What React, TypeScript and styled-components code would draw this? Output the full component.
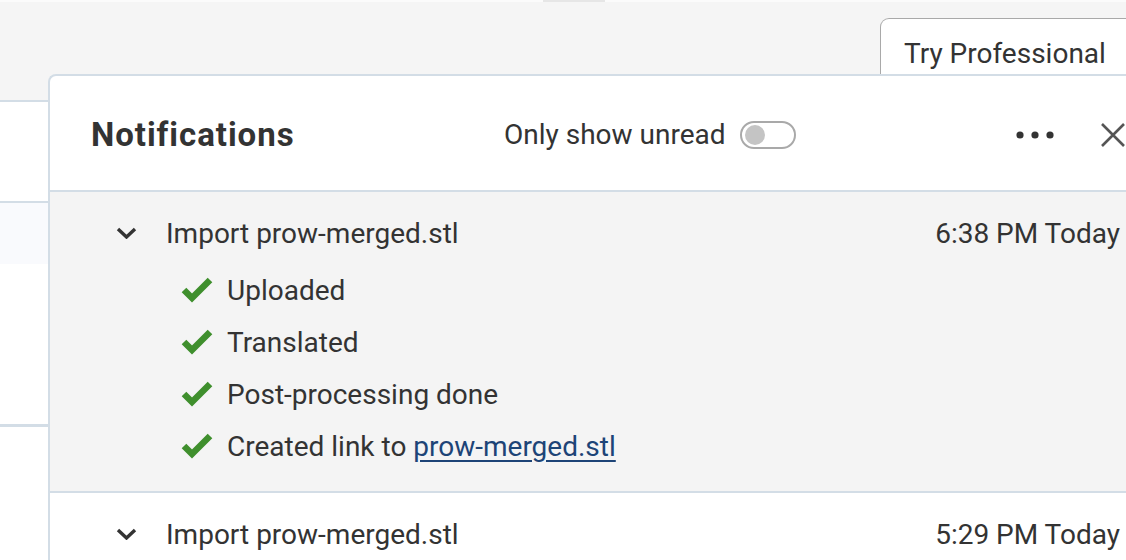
import React from "react";
import styled, { createGlobalStyle } from "styled-components";

const GlobalStyle = createGlobalStyle`
  html, body {
    margin: 0;
    padding: 0;
    background: #ffffff;
    font-family: Roboto, "Liberation Sans", sans-serif;
    color: #333333;
    overflow: hidden;
  }
`;

const Page = styled.div`
  position: relative;
  width: 1126px;
  height: 560px;
  overflow: hidden;
`;

const TopStrip = styled.div`
  height: 2px;
  background: #fbfbfb;
  display: flex;
  padding-left: 543px;
`;

const TopTab = styled.div`
  width: 62px;
  background: #e6e6e6;
`;

const TopBar = styled.header`
  height: 100px;
  background: #f5f5f5;
  border-bottom: 2px solid #d3dde6;
  display: flex;
  justify-content: flex-end;
  align-items: flex-end;
  box-sizing: border-box;
`;

const TryButton = styled.button`
  width: 270px;
  height: 82px;
  margin-right: -24px;
  box-sizing: border-box;
  background: #ffffff;
  border: 1.5px solid #a9a9a9;
  border-bottom: none;
  border-radius: 9px 9px 0 0;
  font-family: inherit;
  font-size: 28px;
  color: #333333;
  text-align: left;
  padding: 18px 0 0 23px;
  align-self: flex-end;
  display: flex;
  align-items: flex-start;
`;

const BgRow = styled.div<{ h: number; tint?: boolean; line?: number }>`
  height: ${({ h }) => h}px;
  background: ${({ tint }) => (tint ? "#f9fafd" : "#ffffff")};
  border-bottom: ${({ line }) => (line ? `${line}px solid #d3dde6` : "none")};
`;

const Panel = styled.section`
  position: absolute;
  left: 48px;
  top: 74px;
  width: 1100px;
  bottom: -20px;
  background: #ffffff;
  border: 2px solid #d3dde6;
  border-right: none;
  border-radius: 8px 0 0 0;
  box-sizing: border-box;
`;

const PanelHeader = styled.div`
  height: 116px;
  display: flex;
  align-items: center;
  padding: 3px 0 0 41px;
  border-bottom: 2px solid #d3dde6;
  box-sizing: border-box;
`;

const Title = styled.h2`
  margin: 0;
  font-size: 33px;
  font-weight: 700;
  letter-spacing: 0.95px;
  color: #333333;
  width: 413px;
`;

const Filter = styled.label`
  display: flex;
  align-items: center;
  gap: 14px;
  font-size: 28px;
  color: #333333;
`;

const Toggle = styled.span`
  width: 56px;
  height: 28px;
  box-sizing: border-box;
  border: 2px solid #a9a9a9;
  border-radius: 14px;
  display: flex;
  align-items: center;
  padding-left: 3px;
`;

const Knob = styled.span`
  width: 20px;
  height: 20px;
  border-radius: 50%;
  background: #c4c4c4;
`;

const Actions = styled.div`
  margin-left: auto;
  margin-right: 22px;
  display: flex;
  align-items: center;
  gap: 46px;
`;

const IconButton = styled.button`
  background: none;
  border: none;
  padding: 0;
  display: flex;
  align-items: center;
  color: #333333;
`;

const Notification = styled.article<{ active?: boolean }>`
  background: ${({ active }) => (active ? "#f4f4f4" : "#ffffff")};
  border-bottom: 2px solid #d3dde6;
  padding: 21px 28px 19px 66px;
`;

const NotifHeader = styled.div`
  display: flex;
  align-items: center;
  height: 40px;
  font-size: 28px;
`;

const Chevron = styled.span`
  width: 30px;
  display: flex;
  align-items: center;
  margin-right: 20px;
`;

const NotifTitle = styled.span`
  flex: 1;
`;

const Time = styled.span`
  white-space: nowrap;
`;

const Steps = styled.ul`
  list-style: none;
  margin: 11px 0 0 0;
  padding: 0 0 0 65px;
`;

const Step = styled.li`
  height: 52px;
  display: flex;
  align-items: center;
  gap: 14px;
  font-size: 28px;
`;

const Link = styled.a`
  color: #1d4477;
  text-decoration: underline;
  text-underline-offset: 4px;
  text-decoration-thickness: 2px;
`;

const ChevronIcon = () => (
  <svg width="21" height="12" viewBox="0 0 21 12">
    <polyline points="2,2 10.5,10 19,2" fill="none" stroke="#333" strokeWidth="3.4" />
  </svg>
);

const CheckIcon = () => (
  <svg width="32" height="26" viewBox="0 0 32 26">
    <polyline points="3,13 11,21 29,3" fill="none" stroke="#3f8f2d" strokeWidth="6.5" />
  </svg>
);

const DotsIcon = () => (
  <svg width="38" height="8" viewBox="0 0 38 8">
    <circle cx="4" cy="4" r="3.6" fill="#333" />
    <circle cx="19" cy="4" r="3.6" fill="#333" />
    <circle cx="34" cy="4" r="3.6" fill="#333" />
  </svg>
);

const CloseIcon = () => (
  <svg width="26" height="26" viewBox="0 0 26 26">
    <path d="M2 2 L24 24 M24 2 L2 24" stroke="#555" strokeWidth="2.6" fill="none" />
  </svg>
);

const steps = ["Uploaded", "Translated", "Post-processing done"];

export default function App() {
  return (
    <Page>
      <GlobalStyle />
      <TopStrip>
        <TopTab />
      </TopStrip>
      <TopBar>
        <TryButton>Try Professional</TryButton>
      </TopBar>
      <BgRow h={99} line={2} />
      <BgRow h={61} tint />
      <BgRow h={160} line={3} />
      <BgRow h={140} />

      <Panel>
        <PanelHeader>
          <Title>Notifications</Title>
          <Filter>
            Only show unread
            <Toggle>
              <Knob />
            </Toggle>
          </Filter>
          <Actions>
            <IconButton>
              <DotsIcon />
            </IconButton>
            <IconButton>
              <CloseIcon />
            </IconButton>
          </Actions>
        </PanelHeader>

        <Notification active>
          <NotifHeader>
            <Chevron>
              <ChevronIcon />
            </Chevron>
            <NotifTitle>Import prow-merged.stl</NotifTitle>
            <Time>6:38 PM Today</Time>
          </NotifHeader>
          <Steps>
            {steps.map((s) => (
              <Step key={s}>
                <CheckIcon />
                {s}
              </Step>
            ))}
            <Step>
              <CheckIcon />
              <span>
                Created link to <Link href="#">prow-merged.stl</Link>
              </span>
            </Step>
          </Steps>
        </Notification>

        <Notification>
          <NotifHeader>
            <Chevron>
              <ChevronIcon />
            </Chevron>
            <NotifTitle>Import prow-merged.stl</NotifTitle>
            <Time>5:29 PM Today</Time>
          </NotifHeader>
        </Notification>
      </Panel>
    </Page>
  );
}
